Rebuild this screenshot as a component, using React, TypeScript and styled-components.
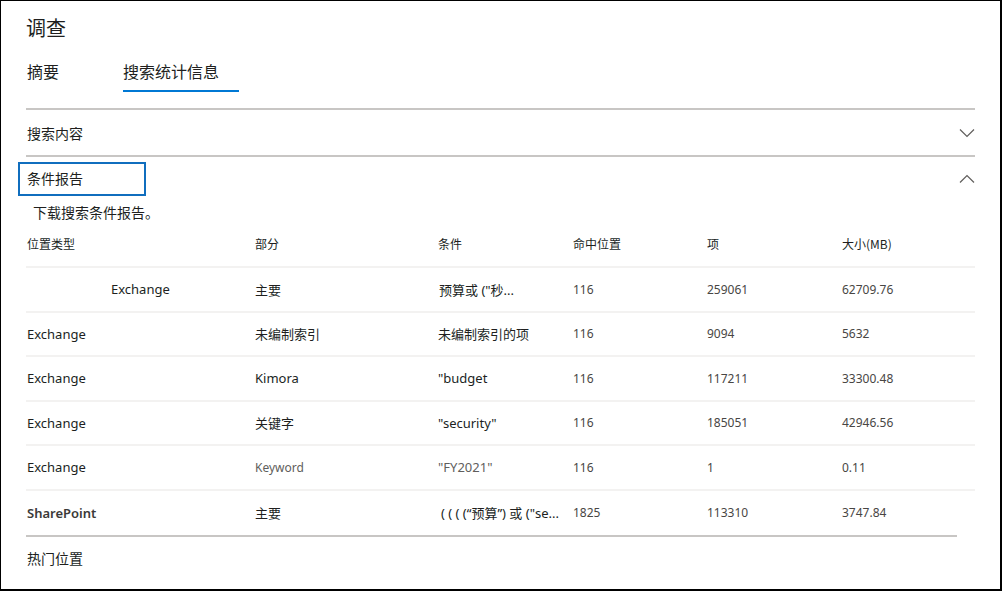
import React from 'react';
import styled, { createGlobalStyle } from 'styled-components';

const GlobalStyle = createGlobalStyle`
  html, body {
    margin: 0;
    padding: 0;
    background: #ffffff;
  }
  body {
    font-family: "Noto Sans", "Noto Sans CJK SC", sans-serif;
    color: #201f1e;
  }
`;

const Frame = styled.div`
  box-sizing: border-box;
  width: 1002px;
  height: 591px;
  border: 1px solid #000;
  border-right-width: 2px;
  border-bottom-width: 2px;
  padding: 0 25px 0 25px;
  overflow: hidden;
  display: flex;
  flex-direction: column;
`;

const Title = styled.h1`
  margin: 0;
  padding-top: 13px;
  font-size: 20px;
  line-height: 28px;
  font-weight: 400;
  font-family: "Noto Sans CJK SC", sans-serif;
  color: #201f1e;
`;

const TabBar = styled.div`
  display: flex;
  gap: 44px;
  margin-top: 17px;
`;

const Tab = styled.div<{ active?: boolean }>`
  font-family: "Noto Sans CJK SC", sans-serif;
  font-size: 16px;
  line-height: 24px;
  padding: 0 20px 7px 0;
  margin-left: ${p => (p.active ? '0' : '1px')};
  border-bottom: 2px solid ${p => (p.active ? '#0078d4' : 'transparent')};
  color: #201f1e;
`;

const Divider = styled.div<{ width?: number; mt?: number }>`
  height: 2px;
  background: #c8c6c4;
  margin-top: ${p => p.mt ?? 0}px;
  width: ${p => (p.width ? `${p.width}px` : '100%')};
  flex: none;
`;

const AccordionHead = styled.div<{ h: number }>`
  height: ${p => p.h}px;
  display: flex;
  align-items: center;
  justify-content: space-between;
  flex: none;
`;

const AccordionLabel = styled.div<{ focused?: boolean }>`
  font-family: "Noto Sans CJK SC", sans-serif;
  font-size: 14px;
  line-height: 20px;
  box-sizing: border-box;
  ${p =>
    p.focused
      ? `
    border: 2px solid #106ebe;
    width: 128px;
    height: 34px;
    margin-left: -8px;
    padding: 4px 0 0 7px;
  `
      : `padding-left: 1px;`}
`;

const Chevron = styled.svg`
  width: 16px;
  height: 10px;
  flex: none;
`;

const Description = styled.div`
  font-family: "Noto Sans CJK SC", sans-serif;
  font-size: 14px;
  line-height: 20px;
  padding-left: 7px;
  margin-top: 1px;
`;

const Grid = styled.div`
  display: grid;
  grid-template-columns: 228px 183px 135px 134px 135px 1fr;
  align-items: center;
  flex: none;
`;

const HeaderRow = styled(Grid)`
  height: 43px;
  margin-top: 3px;
  padding-bottom: 5px;
  border-bottom: 2px solid #f3f2f1;
  box-sizing: border-box;
`;

const HeaderCell = styled.div`
  font-family: "Noto Sans CJK SC", sans-serif;
  font-size: 12px;
  color: #201f1e;
  padding-left: 1px;
`;

const Row = styled(Grid)<{ last?: boolean }>`
  height: 44.5px;
  box-sizing: border-box;
  border-bottom: ${p => (p.last ? 'none' : '2px solid #f3f2f1')};
`;

type Tone = 'dark' | 'grey' | 'num' | 'bold';

const Cell = styled.div<{ tone?: Tone; indent?: number; size?: number }>`
  min-width: 0;
  padding-left: ${p => p.indent ?? 1}px;
  font-size: ${p => p.size ?? 13}px;
  white-space: nowrap;
  overflow: hidden;
  color: ${p =>
    p.tone === 'grey' ? '#605e5c' : p.tone === 'num' ? '#484644' : p.tone === 'bold' ? '#3b3a39' : '#201f1e'};
  font-weight: ${p => (p.tone === 'bold' ? 600 : 400)};
  font-family: "Noto Sans", "Noto Sans CJK SC", sans-serif;
`;

const Footer = styled.div`
  font-family: "Noto Sans CJK SC", sans-serif;
  font-size: 14px;
  line-height: 20px;
  margin-top: 11px;
  padding-left: 1px;
`;

const ChevronDown = () => (
  <Chevron viewBox="0 0 16 10">
    <path d="M1 1.5 L8 8.5 L15 1.5" fill="none" stroke="#605e5c" strokeWidth="1.2" />
  </Chevron>
);

const ChevronUp = () => (
  <Chevron viewBox="0 0 16 10">
    <path d="M1 8.5 L8 1.5 L15 8.5" fill="none" stroke="#605e5c" strokeWidth="1.2" />
  </Chevron>
);

interface ReportRow {
  location: string;
  locTone?: Tone;
  locIndent?: number;
  part: string;
  partTone?: Tone;
  partSize?: number;
  condition: string;
  condTone?: Tone;
  condIndent?: number;
  hits: string;
  items: string;
  size: string;
}

const rows: ReportRow[] = [
  { location: 'Exchange', locIndent: 85, part: '主要', condition: '预算或 ("秒...', condIndent: 2, hits: '116', items: '259061', size: '62709.76' },
  { location: 'Exchange', part: '未编制索引', condition: '未编制索引的项', hits: '116', items: '9094', size: '5632' },
  { location: 'Exchange', part: 'Kimora', condition: '"budget', hits: '116', items: '117211', size: '33300.48' },
  { location: 'Exchange', part: '关键字', condition: '"security"', hits: '116', items: '185051', size: '42946.56' },
  { location: 'Exchange', part: 'Keyword', partTone: 'grey', partSize: 12, condition: '"FY2021"', condTone: 'grey', hits: '116', items: '1', size: '0.11' },
  { location: 'SharePoint', locTone: 'bold', part: '主要', condition: '( ( ( (“预算”) 或  ("se...', condIndent: 4, hits: '1825', items: '113310', size: '3747.84' },
];

const App: React.FC = () => {
  return (
    <>
      <GlobalStyle />
      <Frame>
        <Title>调查</Title>
        <TabBar>
          <Tab>摘要</Tab>
          <Tab active>搜索统计信息</Tab>
        </TabBar>
        <Divider mt={16} />
        <AccordionHead h={45}>
          <AccordionLabel>搜索内容</AccordionLabel>
          <ChevronDown />
        </AccordionHead>
        <Divider />
        <AccordionHead h={44}>
          <AccordionLabel focused>条件报告</AccordionLabel>
          <ChevronUp />
        </AccordionHead>
        <Description>下载搜索条件报告。</Description>
        <HeaderRow>
          <HeaderCell>位置类型</HeaderCell>
          <HeaderCell>部分</HeaderCell>
          <HeaderCell>条件</HeaderCell>
          <HeaderCell>命中位置</HeaderCell>
          <HeaderCell>项</HeaderCell>
          <HeaderCell>大小(MB)</HeaderCell>
        </HeaderRow>
        {rows.map((r, i) => (
          <Row key={i} last={i === rows.length - 1}>
            <Cell tone={r.locTone} indent={r.locIndent}>{r.location}</Cell>
            <Cell tone={r.partTone} size={r.partSize}>{r.part}</Cell>
            <Cell tone={r.condTone} indent={r.condIndent}>{r.condition}</Cell>
            <Cell tone="num" size={12}>{r.hits}</Cell>
            <Cell tone="num" size={12}>{r.items}</Cell>
            <Cell tone="num" size={12}>{r.size}</Cell>
          </Row>
        ))}
        <Divider width={931} />
        <Footer>热门位置</Footer>
      </Frame>
    </>
  );
};

export default App;
